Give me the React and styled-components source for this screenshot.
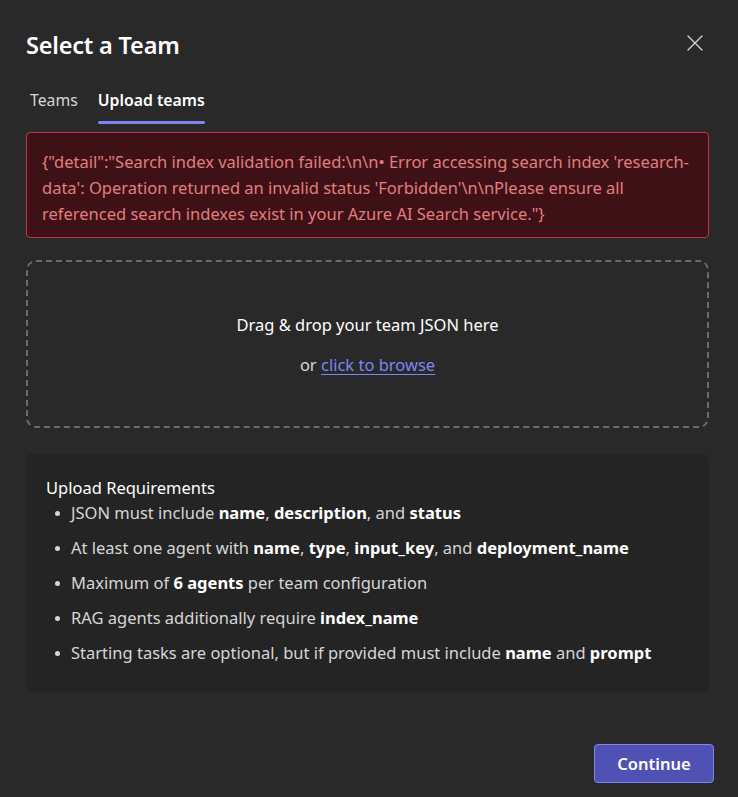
import React from "react"
import styled, { createGlobalStyle } from "styled-components"

const GlobalStyle = createGlobalStyle`
	html, body {
		margin: 0;
		background: #292929;
	}
	body {
		font-family: "Noto Sans", "Open Sans", sans-serif;
		color: #ffffff;
	}
	* {
		box-sizing: border-box;
	}
`

const Dialog = styled.div`
	width: 738px;
	height: 797px;
	padding: 26px 24px 14px 26px;
	display: flex;
	flex-direction: column;
	background: #292929;
`
const Header = styled.div`
	display: flex;
	justify-content: space-between;
	align-items: center;
	height: 38px;
	padding-right: 10px;
`
const Title = styled.h2`
	margin: 0;
	font-size: 23.5px;
	font-weight: 600;
	letter-spacing: -0.2px;
	color: #ffffff;
`
const CloseButton = styled.button`
	display: flex;
	align-items: center;
	justify-content: center;
	width: 18px;
	height: 18px;
	margin-top: -4px;
	padding: 0;
	border: none;
	background: transparent;
	color: #d6d6d6;
	cursor: pointer;
`
const TabList = styled.div`
	display: flex;
	gap: 20px;
	margin-top: 24px;
	padding-left: 4px;
`
const Tab = styled.button`
	position: relative;
	padding: 0 0 12px;
	border: none;
	background: transparent;
	font-family: inherit;
	font-size: 15.8px;
	font-weight: ${(p) => (p.$active ? 600 : 400)};
	color: ${(p) => (p.$active ? "#ffffff" : "#d6d6d6")};
	line-height: 24px;
	cursor: pointer;
	&::after {
		content: "";
		position: absolute;
		left: 0;
		right: 0;
		bottom: 0;
		height: 3px;
		border-radius: 2px;
		background: ${(p) => (p.$active ? "#7f85f5" : "transparent")};
	}
`
const Content = styled.div`
	display: flex;
	flex-direction: column;
	width: 683px;
	margin-top: 8px;
`
const ErrorBox = styled.div`
	padding: 16px 15px 10px;
	border: 1px solid #c4314b;
	border-radius: 4px;
	background: #3e1117;
	color: #e37d80;
	font-size: 16.5px;
	line-height: 26px;
	word-break: break-word;
`
const DropZone = styled.div`
	display: flex;
	flex-direction: column;
	align-items: center;
	justify-content: center;
	gap: 16px;
	height: 168px;
	margin-top: 22px;
	border: 2px dashed #6b6b6b;
	border-radius: 10px;
	font-size: 16.5px;
	line-height: 24px;
`
const DropTitle = styled.div`
	color: #ffffff;
	margin-top: 2px;
`
const DropHint = styled.div`
	color: #d6d6d6;
`
const BrowseLink = styled.a`
	color: #7f85f5;
	text-decoration: underline;
	text-underline-offset: 3px;
	cursor: pointer;
`
const Requirements = styled.div`
	height: 239px;
	margin-top: 25px;
	padding: 23px 20px;
	border-radius: 8px;
	background: #242424;
	font-size: 16.5px;
`
const ReqTitle = styled.div`
	line-height: 24px;
	color: #ffffff;
`
const ReqList = styled.ul`
	margin: 1px 0 0;
	padding-left: 25px;
	list-style: none;
`
const ReqItem = styled.li`
	position: relative;
	line-height: 24px;
	color: #d6d6d6;
	& + & {
		margin-top: 11px;
	}
	&::before {
		content: "";
		position: absolute;
		left: -16px;
		top: 10px;
		width: 5px;
		height: 5px;
		border-radius: 50%;
		background: #d6d6d6;
	}
	b {
		color: #ffffff;
		font-weight: 700;
	}
`
const Footer = styled.div`
	display: flex;
	justify-content: flex-end;
	margin-top: auto;
`
const PrimaryButton = styled.button`
	width: 120px;
	height: 39px;
	border: 1px solid #7f85f5;
	border-radius: 4px;
	background: #4f52b2;
	color: #ffffff;
	font-family: inherit;
	font-size: 16.5px;
	font-weight: 600;
	cursor: pointer;
`

const errorText =
	"{\"detail\":\"Search index validation failed:\\n\\n• Error accessing search index 'research-data': Operation returned an invalid status 'Forbidden'\\n\\nPlease ensure all referenced search indexes exist in your Azure AI Search service.\"}"

function CloseIcon() {
	return (
		<svg width="16" height="16" viewBox="0 0 16 16" fill="none">
			<path d="M1 1L15 15M15 1L1 15" stroke="currentColor" strokeWidth="1.3" strokeLinecap="round" />
		</svg>
	)
}

function App() {
	return (
		<Dialog>
			<GlobalStyle />
			<Header>
				<Title>Select a Team</Title>
				<CloseButton aria-label="Close">
					<CloseIcon />
				</CloseButton>
			</Header>
			<TabList>
				<Tab>Teams</Tab>
				<Tab $active>Upload teams</Tab>
			</TabList>
			<Content>
				<ErrorBox>{errorText}</ErrorBox>
				<DropZone>
					<DropTitle>Drag &amp; drop your team JSON here</DropTitle>
					<DropHint>
						or <BrowseLink>click to browse</BrowseLink>
					</DropHint>
				</DropZone>
				<Requirements>
					<ReqTitle>Upload Requirements</ReqTitle>
					<ReqList>
						<ReqItem>
							JSON must include <b>name</b>, <b>description</b>, and <b>status</b>
						</ReqItem>
						<ReqItem>
							At least one agent with <b>name</b>, <b>type</b>, <b>input_key</b>, and <b>deployment_name</b>
						</ReqItem>
						<ReqItem>
							Maximum of <b>6 agents</b> per team configuration
						</ReqItem>
						<ReqItem>
							RAG agents additionally require <b>index_name</b>
						</ReqItem>
						<ReqItem>
							Starting tasks are optional, but if provided must include <b>name</b> and <b>prompt</b>
						</ReqItem>
					</ReqList>
				</Requirements>
			</Content>
			<Footer>
				<PrimaryButton>Continue</PrimaryButton>
			</Footer>
		</Dialog>
	)
}

export default App
